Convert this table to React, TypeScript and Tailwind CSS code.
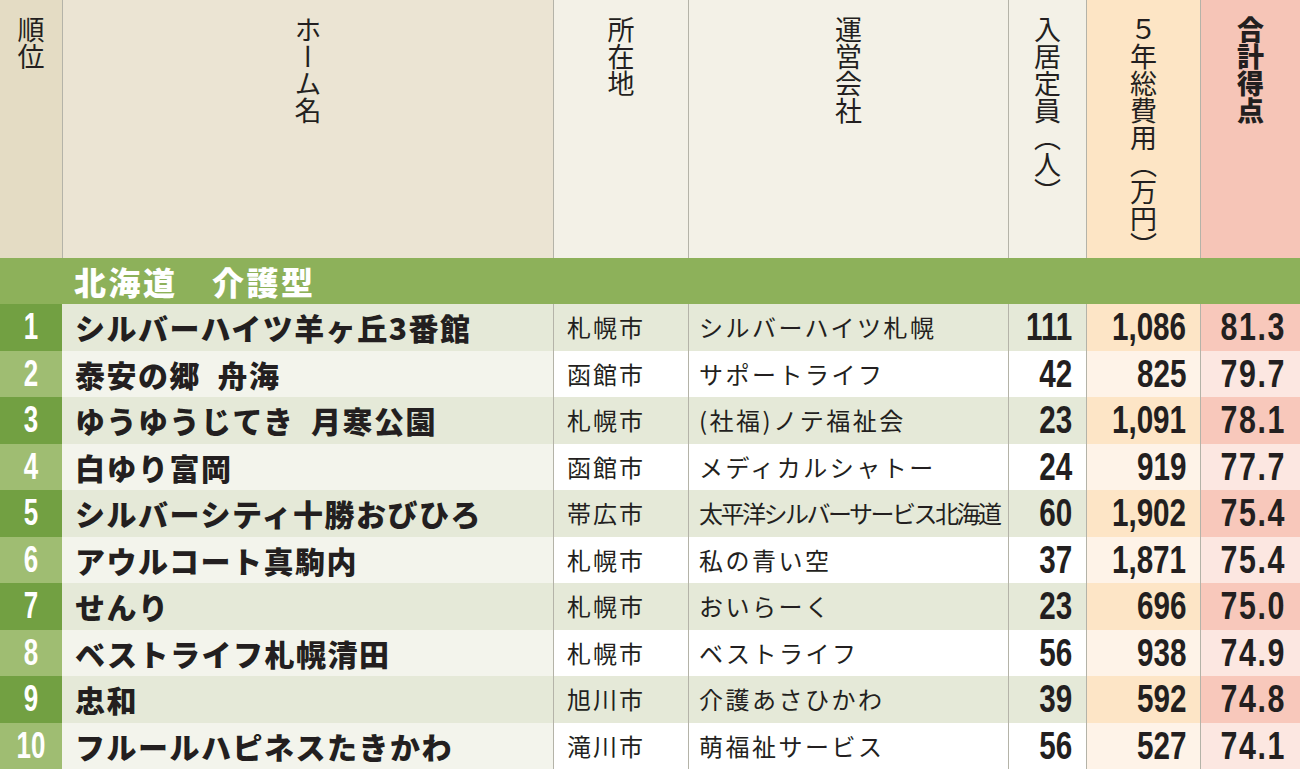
import React from "react";

type Row = {
  rank: number;
  name: string;
  city: string;
  company: string;
  capacity: string;
  cost: string;
  score: string;
};

const rows: Row[] = [
  { rank: 1, name: "シルバーハイツ羊ヶ丘3番館", city: "札幌市", company: "シルバーハイツ札幌", capacity: "111", cost: "1,086", score: "81.3" },
  { rank: 2, name: "泰安の郷\u2002舟海", city: "函館市", company: "サポートライフ", capacity: "42", cost: "825", score: "79.7" },
  { rank: 3, name: "ゆうゆうじてき\u2002月寒公園", city: "札幌市", company: "(社福)ノテ福祉会", capacity: "23", cost: "1,091", score: "78.1" },
  { rank: 4, name: "白ゆり富岡", city: "函館市", company: "メディカルシャトー", capacity: "24", cost: "919", score: "77.7" },
  { rank: 5, name: "シルバーシティ十勝おびひろ", city: "帯広市", company: "太平洋シルバーサービス北海道", capacity: "60", cost: "1,902", score: "75.4" },
  { rank: 6, name: "アウルコート真駒内", city: "札幌市", company: "私の青い空", capacity: "37", cost: "1,871", score: "75.4" },
  { rank: 7, name: "せんり", city: "札幌市", company: "おいらーく", capacity: "23", cost: "696", score: "75.0" },
  { rank: 8, name: "ベストライフ札幌清田", city: "札幌市", company: "ベストライフ", capacity: "56", cost: "938", score: "74.9" },
  { rank: 9, name: "忠和", city: "旭川市", company: "介護あさひかわ", capacity: "39", cost: "592", score: "74.8" },
  { rank: 10, name: "フルールハピネスたきかわ", city: "滝川市", company: "萌福祉サービス", capacity: "56", cost: "527", score: "74.1" },
];

const jp = "font-['Noto_Sans_CJK_JP','Noto_Sans_CJK_SC',sans-serif]";
// no condensed face installed, so squeeze Liberation Sans Bold horizontally
const num = "font-['Liberation_Sans',Arial,sans-serif] font-bold inline-block";

function HeadCell({ label, bg, bold }: { label: string; bg: string; bold?: boolean }) {
  return (
    <div className={`${bg} flex justify-center border-l border-[#b4b3a8] pt-[16px] first:border-l-0`}>
      <span
        className={`${jp} ${bold ? "font-black" : "font-normal"} text-[27px] leading-[27px] text-[#231f20] [writing-mode:vertical-rl]`}
      >
        {label}
      </span>
    </div>
  );
}

function NumCell({ value, bg, pr, wide }: { value: string; bg: string; pr: string; wide?: boolean }) {
  return (
    <div className={`${bg} flex items-center justify-end border-l border-[#b4b3a8] ${pr}`}>
      <span
        className={`${num} origin-right text-[38px] leading-none text-[#231f20] ${
          wide ? "scale-x-[0.8] tracking-[2px]" : "scale-x-[0.78]"
        }`}
      >
        {value}
      </span>
    </div>
  );
}

export default function App() {
  return (
    <div className="w-[1300px] h-[769px] overflow-hidden bg-white">
      <div className="grid grid-cols-[62px_491px_135px_320px_78px_114px_100px] grid-rows-[258px_46px_repeat(10,46.5px)]">
        <HeadCell label="順位" bg="bg-[#e4dcc4]" />
        <HeadCell label="ホーム名" bg="bg-[#ebe4d3]" />
        <HeadCell label="所在地" bg="bg-[#f3f1e7]" />
        <HeadCell label="運営会社" bg="bg-[#f3f1e7]" />
        <HeadCell label="入居定員（人）" bg="bg-[#f3f1e7]" />
        <HeadCell label="５年総費用（万円）" bg="bg-[#fde5c5]" />
        <HeadCell label="合計得点" bg="bg-[#f6c5b7]" bold />

        <div className="col-span-7 flex items-center bg-[#8db15a] pl-[74px]">
          <span className={`${jp} text-[32px] font-black leading-none tracking-[2.5px] text-white`}>北海道　介護型</span>
        </div>

        {rows.map((r) => {
          const odd = r.rank % 2 === 1;
          const plain = odd ? "bg-[#e5e9d8]" : "bg-white";
          return (
            <React.Fragment key={r.rank}>
              <div className={`${odd ? "bg-[#72a042]" : "bg-[#9fbd72]"} flex items-center justify-center`}>
                <span className={`${num} scale-x-[0.72] text-[36px] leading-none text-white`}>{r.rank}</span>
              </div>
              <div className={`${odd ? "bg-[#e5e9d8]" : "bg-[#f3f4ec]"} flex items-center pl-[13px]`}>
                <span className={`${jp} whitespace-nowrap text-[30px] font-black leading-none tracking-[1.5px] text-[#231f20]`}>
                  {r.name}
                </span>
              </div>
              <div className={`${plain} flex items-center border-l border-[#b4b3a8] pl-[13px]`}>
                <span className={`${jp} text-[24px] leading-none tracking-[2px] text-[#231f20]`}>{r.city}</span>
              </div>
              <div className={`${plain} flex items-center border-l border-[#b4b3a8] pl-[10px]`}>
                <span
                  className={`${jp} whitespace-nowrap text-[24px] leading-none text-[#231f20] ${
                    r.company.length > 12 ? "tracking-[-2.5px]" : "tracking-[2.5px]"
                  }`}
                >
                  {r.company}
                </span>
              </div>
              <NumCell value={r.capacity} bg={plain} pr="pr-[14px]" />
              <NumCell value={r.cost} bg={odd ? "bg-[#fde5c6]" : "bg-[#fef3e8]"} pr="pr-[14px]" />
              <NumCell value={r.score} bg={odd ? "bg-[#f8c8bb]" : "bg-[#fce7e1]"} pr="pr-[14px]" wide />
            </React.Fragment>
          );
        })}
      </div>
    </div>
  );
}
